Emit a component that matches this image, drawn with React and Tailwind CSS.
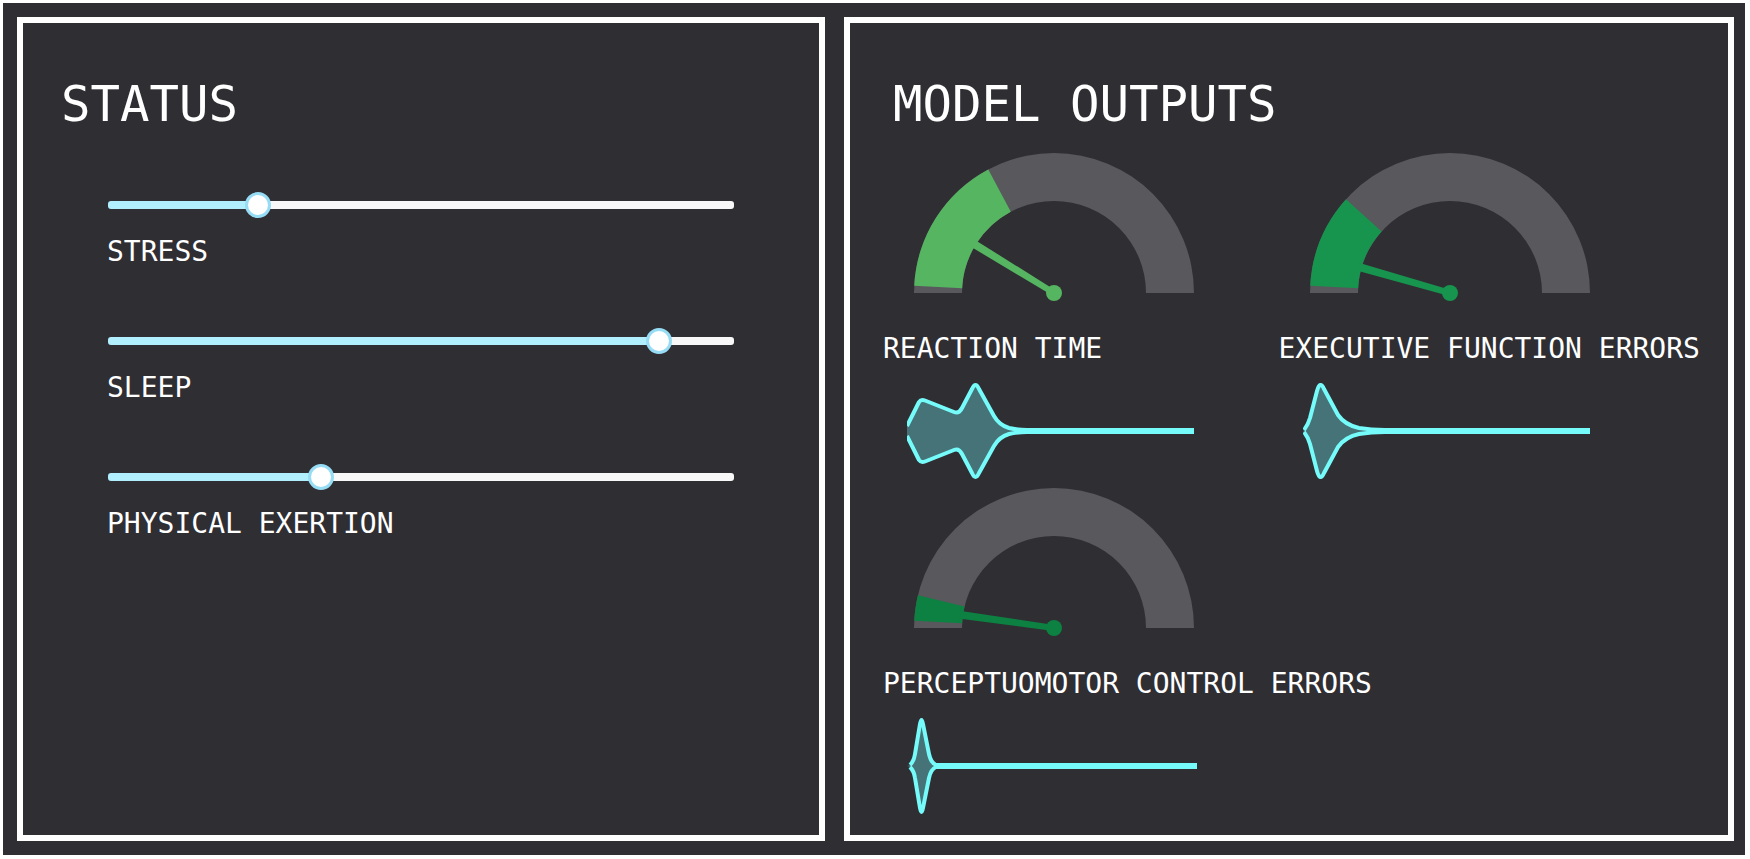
import { useState } from "react";

const SLIDERS = [
  { id: "stress", label: "STRESS", value: 22.8 },
  { id: "sleep", label: "SLEEP", value: 89.6 },
  { id: "exertion", label: "PHYSICAL EXERTION", value: 33.3 },
];

// outline is the upper half of the distribution, mirrored for the lower half
const OUTPUTS = [
  {
    label: "REACTION TIME",
    color: "#55b561",
    end: 62,
    needle: 31.5,
    start: "M0,-5",
    outline:
      "L12,-29 Q14,-32 18,-30.5 L47,-19 Q52,-17 55,-23 L65,-42 Q68.5,-50 72,-42 L87,-15 Q92,-6 102,-3 Q111,-1 120,-1 L287,-1",
  },
  {
    label: "EXECUTIVE FUNCTION ERRORS",
    color: "#17944e",
    end: 42,
    needle: 16,
    start: "M1,-1",
    outline:
      "Q5,-6 7,-13 L14,-40 Q17,-51 21,-42 L35,-16 Q42,-6 56,-3 Q68,-1 82,-1 L287,-1",
  },
  {
    label: "PERCEPTUOMOTOR CONTROL ERRORS",
    color: "#0c8141",
    end: 13.5,
    needle: 8,
    start: "M3,-1",
    outline:
      "Q7,-5 8,-12 L13,-42 Q14.5,-50 16,-42 L22,-12 Q24,-3 29,-1 L290,-1",
  },
];

const CX = 140;
const CY = 140;

// angle in degrees, measured clockwise from the left end of the dial
const polar = (r, deg) => {
  const a = (deg * Math.PI) / 180;
  return `${CX - r * Math.cos(a)},${CY - r * Math.sin(a)}`;
};

const ring = (from, to) =>
  `M${polar(140, from)} A140,140 0 0 1 ${polar(140, to)} L${polar(92, to)} A92,92 0 0 0 ${polar(92, from)} Z`;

function Gauge({ color, end, needle }) {
  return (
    <svg
      className="ml-[31px] block h-[148px] w-[280px]"
      viewBox="0 0 280 148"
      aria-hidden="true"
    >
      <path d={ring(0, 180)} fill="#59585d" />
      <path d={ring(3, end)} fill={color} />
      <g fill={color}>
        <path
          d={`M44,${CY - 4} L${CX},${CY - 3} L${CX},${CY + 3} L44,${CY + 4} Z`}
          transform={`rotate(${needle} ${CX} ${CY})`}
        />
        <circle cx={CX} cy={CY} r="8" />
      </g>
    </svg>
  );
}

function Violin({ start, outline }) {
  const Half = () => (
    <>
      <path d={`${start} ${outline} V0 H0 Z`} fill="#457377" />
      <path
        d={`${start} ${outline}`}
        fill="none"
        stroke="#75fbfa"
        strokeWidth="4"
        strokeLinejoin="round"
      />
    </>
  );

  return (
    <svg
      className="mt-[18px] ml-6 block h-24 w-[290px]"
      viewBox="0 -48 290 96"
      aria-hidden="true"
    >
      <Half />
      <g transform="scale(1 -1)">
        <Half />
      </g>
    </svg>
  );
}

function StatusSlider({ id, label, value: initial }) {
  const [value, setValue] = useState(initial);

  return (
    <div className="flex flex-col">
      <div className="flex px-px">
        <input
          id={id}
          type="range"
          min="0"
          max="100"
          step="0.1"
          value={value}
          onChange={(e) => setValue(Number(e.target.value))}
          className="h-[26px] w-full cursor-pointer appearance-none bg-transparent [&::-webkit-slider-runnable-track]:h-2 [&::-webkit-slider-runnable-track]:rounded-[3px] [&::-webkit-slider-runnable-track]:bg-[image:var(--track)] [&::-webkit-slider-thumb]:-mt-[9px] [&::-webkit-slider-thumb]:size-[26px] [&::-webkit-slider-thumb]:appearance-none [&::-webkit-slider-thumb]:rounded-full [&::-webkit-slider-thumb]:border-[3px] [&::-webkit-slider-thumb]:border-[#96dcf5] [&::-webkit-slider-thumb]:bg-white"
          style={{
            "--track": `linear-gradient(to right, #b2effe ${value}%, #f8f8f8 ${value}%)`,
          }}
        />
      </div>
      <label htmlFor={id} className="mt-[18px] text-[28px] leading-8">
        {label}
      </label>
    </div>
  );
}

export default function App() {
  return (
    <div className="flex min-h-screen bg-white pt-[3px] pr-[5px] pb-1 pl-[3px]">
      <main className="grid flex-1 grid-cols-[808fr_890fr] gap-[19px] bg-[#2f2e33] py-[14px] pr-[11px] pl-[14px] font-['DejaVu_Sans_Mono',monospace] text-white">
        <section className="border-6 border-white pt-[54px]">
          <h1 className="pl-[38px] text-[49px] leading-14">STATUS</h1>
          <div className="mt-[59px] flex flex-col gap-[60px] px-[84px]">
            {SLIDERS.map((slider) => (
              <StatusSlider key={slider.id} {...slider} />
            ))}
          </div>
        </section>

        <section className="border-6 border-white pt-[54px] pr-[54px] pl-[33px]">
          <h1 className="pl-[10px] text-[49px] leading-14 whitespace-nowrap">
            MODEL OUTPUTS
          </h1>
          <div className="mt-5 grid grid-cols-2 gap-y-[9px]">
            {OUTPUTS.map((output) => (
              <div key={output.label}>
                <Gauge
                  color={output.color}
                  end={output.end}
                  needle={output.needle}
                />
                <h2 className="mt-8 text-[28px] leading-8 whitespace-nowrap">
                  {output.label}
                </h2>
                <Violin start={output.start} outline={output.outline} />
              </div>
            ))}
          </div>
        </section>
      </main>
    </div>
  );
}
